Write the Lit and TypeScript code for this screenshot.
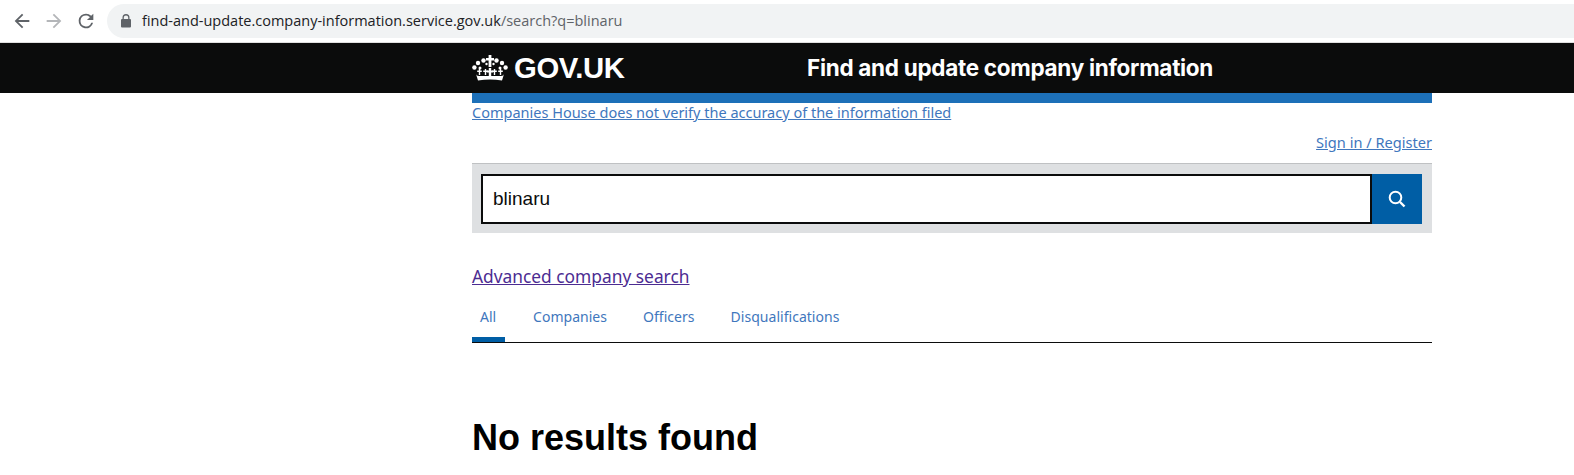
import { LitElement, html, css, svg } from "lit";
import { customElement } from "lit/decorators.js";

const crownDots = [
  [2.4, 12.5, 2.2], [6, 8, 2.2], [11.5, 5.5, 2.2], [24.5, 5.5, 2.2], [30, 8, 2.2], [33.6, 12.5, 2.2],
  [14.5, 9, 1.2], [21.5, 9, 1.2], [8, 13, 1.5], [28, 13, 1.5],
];
const crosses = [7.5, 13.5, 22.5, 28.5];

@customElement("app-root")
export class AppRoot extends LitElement {
  static styles = css`
    :host { display: block; width: 1574px; height: 475px; overflow: hidden; background: #fff; font-family: "Noto Sans", sans-serif; }
    .toolbar { height: 42px; display: flex; align-items: center; background: #fff; border-bottom: 1px solid #e0e0e0; box-sizing: content-box; }
    .nav { display: flex; align-items: center; gap: 10px; padding-left: 11px; padding-right: 10px; }
    .nav svg { display: block; width: 22px; height: 22px; }
    .omnibox { flex: 1; height: 34px; margin-top: -1px; background: #f1f3f4; border-radius: 17px 0 0 17px; display: flex; align-items: center; padding-left: 13px; gap: 10px; font-size: 14.5px; color: #202124; font-family: "Open Sans", sans-serif; }
    .omnibox svg { width: 12px; height: 14px; }
    .path { color: #5f6368; }
    .banner { height: 50px; background: #0b0c0c; display: flex; }
    .banner-inner { width: 960px; margin-left: 472px; display: flex; align-items: center; color: #fff; font-family: "Inter", sans-serif; font-weight: 700; }
    .logo { display: flex; align-items: center; gap: 6px; width: 335px; font-size: 29.3px; letter-spacing: -0.4px; font-family: "Liberation Sans", sans-serif; }
    .logo svg { width: 36px; height: 26px; }
    .service { font-size: 22.5px; letter-spacing: -0.3px; padding-bottom: 2px; }
    main { width: 960px; margin-left: 472px; display: flex; flex-direction: column; }
    .bluebar { height: 10px; background: #1d70b8; }
    a { color: #3f77bd; text-decoration: underline; }
    .notice { font-size: 14.5px; line-height: 18px; }
    .sign { text-align: right; font-size: 14.6px; line-height: 20px; margin-top: 11px; }
    .search { margin-top: 11px; height: 69px; background: #dee0e2; border-top: 1px solid #bfc1c3; display: flex; align-items: center; padding: 0 10px 0 9px; box-sizing: content-box; }
    .input { flex: 1; height: 50px; box-sizing: border-box; border: 2px solid #0b0c0c; background: #fff; display: flex; align-items: center; padding-left: 10px; font-family: "Liberation Sans", sans-serif; font-size: 19px; color: #0b0c0c; }
    .btn { width: 50px; height: 50px; background: #005ea5; display: flex; align-items: center; justify-content: center; }
    .btn svg { width: 20px; height: 20px; }
    .advanced { margin-top: 31px; font-size: 17.35px; line-height: 25px; }
    .advanced a { color: #4c2c92; }
    .tabs { margin-top: 14px; height: 39px; display: flex; gap: 20px; border-bottom: 1px solid #0b0c0c; }
    .tab { font-size: 14px; letter-spacing: 0.03px; padding: 0 8px; line-height: 27px; color: #3f77bd; }
    .tab.active { box-shadow: inset 0 -5px 0 #005ea5; width: 17px; }
    h1 { margin: 73px 0 0; font-family: "Liberation Sans", sans-serif; font-size: 36px; line-height: 44px; font-weight: 700; color: #000; }
  `;

  render() {
    return html`
      <div class="toolbar">
        <div class="nav">
          <svg viewBox="0 0 24 24"><path d="M20 11H7.83l5.59-5.59L12 4l-8 8 8 8 1.41-1.41L7.83 13H20v-2z" fill="#5f6368"/></svg>
          <svg viewBox="0 0 24 24"><path d="M4 13h12.17l-5.59 5.59L12 20l8-8-8-8-1.41 1.41L16.17 11H4v2z" fill="#b4b6b9"/></svg>
          <svg viewBox="0 0 24 24"><path d="M17.65 6.35A7.96 7.96 0 0 0 12 4a8 8 0 1 0 7.73 10h-2.08A6 6 0 1 1 12 6c1.66 0 3.14.69 4.22 1.78L13 11h7V4l-2.35 2.35z" fill="#5f6368"/></svg>
        </div>
        <div class="omnibox">
          <svg viewBox="0 0 12 14"><path d="M10 5H9.5V3.6a3.5 3.5 0 0 0-7 0V5H2a1 1 0 0 0-1 1v6.5a1 1 0 0 0 1 1h8a1 1 0 0 0 1-1V6a1 1 0 0 0-1-1zM3.8 5V3.6a2.2 2.2 0 0 1 4.4 0V5H3.8z" fill="#5f6368"/></svg>
          <span>find-and-update.company-information.service.gov.uk<span class="path">/search?q=blinaru</span></span>
        </div>
      </div>
      <div class="banner">
        <div class="banner-inner">
          <div class="logo">
            <svg viewBox="0 0 36 26">
              ${crownDots.map(([x, y, r]) => svg`<circle cx=${x} cy=${y} r=${r} fill="#fff"/>`)}
              <path d="M16.6 0h2.8v3h2.6v2.6h-2.6V12h-2.8V5.6H14V3h2.6z" fill="#fff"/>
              ${crosses.map((x) => svg`<path d="M${x - 0.7} 14h1.4v1.6h1.6v1.4h-1.6v3h-1.4v-3h-1.6v-1.4h1.6z" fill="#fff"/>`)}
              <path d="M16.8 13h2.4v2.4h2v2h-2V21h-2.4v-3.6h-2v-2h2z" fill="#fff"/>
              <path d="M3.5 17.5C4 20 5 21 7 21h22c2 0 3-1 3.5-3.5L30 25.5c-8-1.2-16-1.2-24 0z" fill="#fff"/>
            </svg>
            <span>GOV.UK</span>
          </div>
          <div class="service">Find and update company information</div>
        </div>
      </div>
      <main>
        <div class="bluebar"></div>
        <div class="notice"><a href="#">Companies House does not verify the accuracy of the information filed</a></div>
        <div class="sign"><a href="#">Sign in / Register</a></div>
        <div class="search">
          <div class="input">blinaru</div>
          <div class="btn">
            <svg viewBox="0 0 20 20"><circle cx="8.5" cy="8.5" r="5.8" fill="none" stroke="#fff" stroke-width="2"/><path d="M13 13l4.5 4.5" stroke="#fff" stroke-width="2.4"/></svg>
          </div>
        </div>
        <div class="advanced"><a href="#">Advanced company search</a></div>
        <div class="tabs">
          <div class="tab active">All</div>
          <div class="tab">Companies</div>
          <div class="tab">Officers</div>
          <div class="tab">Disqualifications</div>
        </div>
        <h1>No results found</h1>
      </main>
    `;
  }
}
